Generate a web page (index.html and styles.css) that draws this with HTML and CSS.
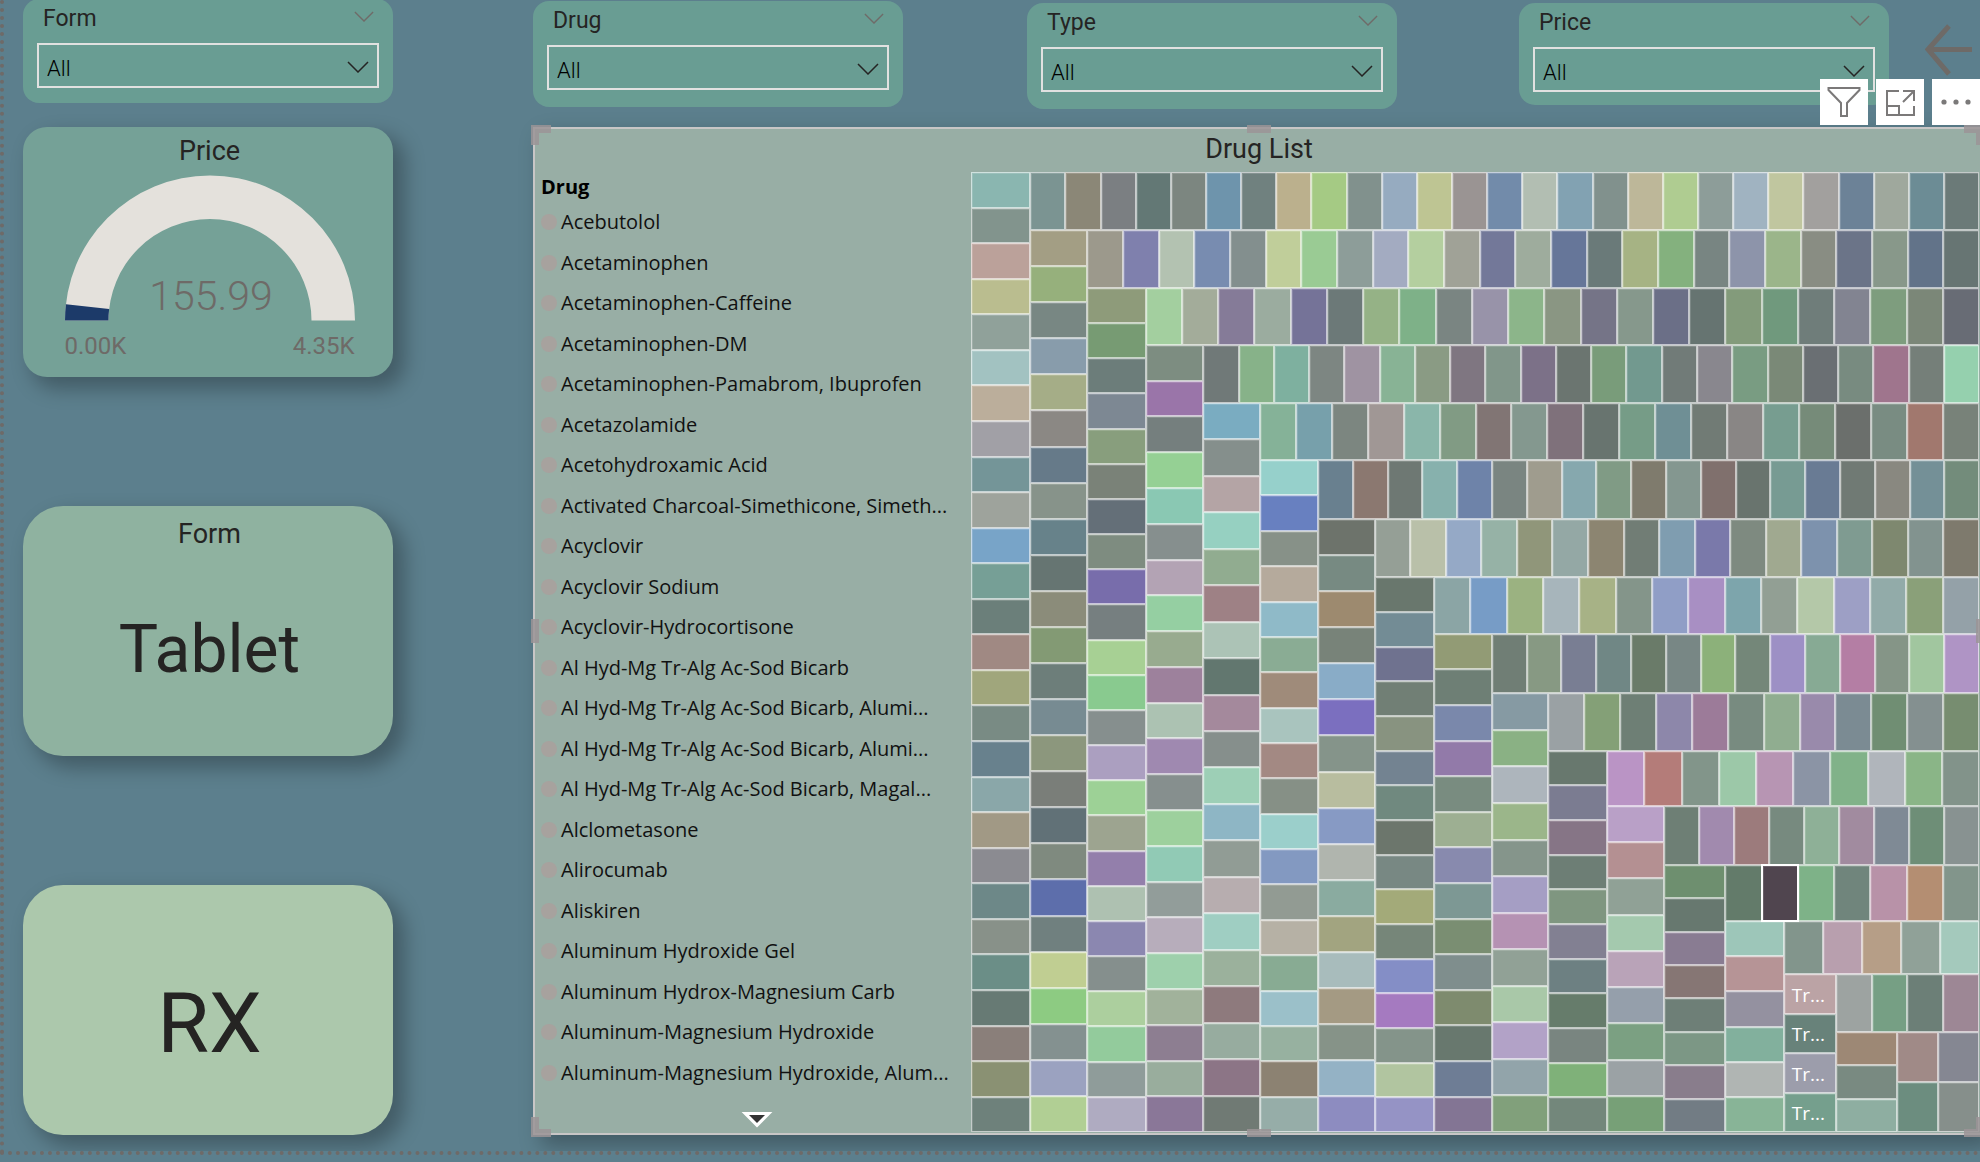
FILE: index.html
```html
<!DOCTYPE html>
<html lang="en">
<head>
<meta charset="utf-8">
<title>Drug List</title>
<link rel="stylesheet" href="styles.css">
</head>
<body>
<svg class="defs" aria-hidden="true">
  <symbol id="chevron" viewBox="0 0 22 12"><path d="M1 1l10 10L21 1" fill="none" stroke="currentColor" stroke-width="1.5"/></symbol>
</svg>
<main class="report">
  <section class="slicer slicer-form">
    <header class="slicer-head"><label for="form">Form</label><svg class="slicer-caret"><use href="#chevron"/></svg></header>
    <div class="dropdown"><select id="form"><option>All</option></select><svg class="dropdown-caret"><use href="#chevron"/></svg></div>
  </section>

  <div class="filters">
    <section class="slicer slicer-drug">
      <header class="slicer-head"><label for="drug">Drug</label><svg class="slicer-caret"><use href="#chevron"/></svg></header>
      <div class="dropdown"><select id="drug"><option>All</option></select><svg class="dropdown-caret"><use href="#chevron"/></svg></div>
    </section>
    <section class="slicer slicer-type">
      <header class="slicer-head"><label for="type">Type</label><svg class="slicer-caret"><use href="#chevron"/></svg></header>
      <div class="dropdown"><select id="type"><option>All</option></select><svg class="dropdown-caret"><use href="#chevron"/></svg></div>
    </section>
    <section class="slicer slicer-price">
      <header class="slicer-head"><label for="price">Price</label><svg class="slicer-caret"><use href="#chevron"/></svg></header>
      <div class="dropdown"><select id="price"><option>All</option></select><svg class="dropdown-caret"><use href="#chevron"/></svg></div>
    </section>
    <button class="back" type="button" aria-label="Back">
      <svg width="48" height="52" viewBox="0 0 48 52"><path d="M24 2L3 25.500L24 50M3 25.500H47" fill="none" stroke="#6e6a67" stroke-width="5"/></svg>
    </button>
  </div>

  <div class="cards">
    <section class="card card-gauge">
      <h2 class="card-title">Price</h2>
      <svg class="gauge" viewBox="0 0 290 146" role="img" aria-label="155.99 of 4.35K">
        <path d="M0 145.500A145 145 0 0 1 290 145.500H246.500A101.500 101.500 0 0 0 43.500 145.500Z" fill="#e4e1dc"/>
        <path d="M0 145.500A145 145 0 0 1 .92 129.200L44.140 134.100A101.500 101.500 0 0 0 43.500 145.500Z" fill="#1c3a69"/>
        <text class="gauge-value" x="146" y="135" text-anchor="middle">155.99</text>
      </svg>
      <div class="gauge-range"><span>0.00K</span><span>4.35K</span></div>
    </section>
    <section class="card card-form">
      <h2 class="card-title">Form</h2>
      <p class="card-value">Tablet</p>
    </section>
    <section class="card card-type">
      <p class="card-value">RX</p>
    </section>
  </div>

  <section class="panel">
    <h2 class="panel-title">Drug List</h2>
    <div class="panel-body">
      <div class="legend">
        <h3 class="legend-title">Drug</h3>
        <ul class="legend-list">
          <li>Acebutolol</li>
          <li>Acetaminophen</li>
          <li>Acetaminophen-Caffeine</li>
          <li>Acetaminophen-DM</li>
          <li>Acetaminophen-Pamabrom, Ibuprofen</li>
          <li>Acetazolamide</li>
          <li>Acetohydroxamic Acid</li>
          <li>Activated Charcoal-Simethicone, Simeth...</li>
          <li>Acyclovir</li>
          <li>Acyclovir Sodium</li>
          <li>Acyclovir-Hydrocortisone</li>
          <li>Al Hyd-Mg Tr-Alg Ac-Sod Bicarb</li>
          <li>Al Hyd-Mg Tr-Alg Ac-Sod Bicarb, Alumi...</li>
          <li>Al Hyd-Mg Tr-Alg Ac-Sod Bicarb, Alumi...</li>
          <li>Al Hyd-Mg Tr-Alg Ac-Sod Bicarb, Magal...</li>
          <li>Alclometasone</li>
          <li>Alirocumab</li>
          <li>Aliskiren</li>
          <li>Aluminum Hydroxide Gel</li>
          <li>Aluminum Hydrox-Magnesium Carb</li>
          <li>Aluminum-Magnesium Hydroxide</li>
          <li>Aluminum-Magnesium Hydroxide, Alum...</li>
        </ul>
        <button class="legend-more" type="button" aria-label="Next page">
          <svg width="32" height="17" viewBox="0 0 32 17"><path d="M3 2H29L16 15Z" fill="#fff" stroke="#fff" stroke-width="2"/><path d="M8 4H24L16 12Z" fill="#333"/></svg>
        </button>
      </div>
      <div class="treemap" id="treemap"></div>
    </div>

    <div class="actions">
      <button type="button" aria-label="Filters"><svg width="34" height="34" viewBox="0 0 34 34"><path d="M1.500 3H32.500V5L20 18V31H14V18L1.500 5Z" fill="none" stroke="#7b7979" stroke-width="2"/></svg></button>
      <button type="button" aria-label="Focus mode"><svg width="34" height="34" viewBox="0 0 34 34"><path d="M16 6H4V30H31V21M4 21H16V30M20 6H31V16M31 6L20 17" fill="none" stroke="#7b7979" stroke-width="2"/></svg></button>
      <button type="button" aria-label="More options"><svg width="34" height="34" viewBox="0 0 34 34"><g fill="#7b7979"><circle cx="5" cy="17" r="2.600"/><circle cx="17" cy="17" r="2.600"/><circle cx="29" cy="17" r="2.600"/></g></svg></button>
    </div>

    <i class="grip grip-corner grip-nw"></i><i class="grip grip-n"></i><i class="grip grip-corner grip-ne"></i>
    <i class="grip grip-w"></i><i class="grip grip-e"></i>
    <i class="grip grip-corner grip-sw"></i><i class="grip grip-s"></i><i class="grip grip-corner grip-se"></i>
  </section>
</main>
<script src="treemap.js"></script>
</body>
</html>
```
FILE: styles.css
```css
* { box-sizing: border-box; }

body {
  margin: 0;
  min-height: 100vh;
  background: #5c7f8d;
  color: #252423;
  font-family: Roboto, "Liberation Sans", sans-serif;
  overflow-x: hidden;
}

h2, h3, p, ul { margin: 0; padding: 0; font-weight: 400; }
button { border: 0; padding: 0; background: none; display: grid; place-items: center; }
.defs { position: absolute; width: 0; height: 0; }

/* Report canvas with the dotted page edge */
.report {
  min-height: calc(100vh - 7px);
  display: grid;
  grid-template-columns: 370fr 1447fr;
  grid-template-rows: 127px 1fr;
  column-gap: 140px;
  padding: 0 0 16px 19px;
  border: 4px dotted #6e6a68;
  border-top: 0;
  border-right: 0;
  overflow: hidden;
}

/* Slicers */
.slicer {
  height: 106px;
  padding: 0 14px;
  border-radius: 16px;
  background: #699d93;
}
.slicer-form { height: 104px; margin-top: -1px; }
.slicer-drug { margin-top: 1px; }
.slicer-type { margin-top: 3px; }
.slicer-price { height: 102px; margin-top: 3px; }
.slicer-head {
  display: flex;
  justify-content: space-between;
  height: 44px;
  padding: 0 5px 0 6px;
  font-size: 23px;
  line-height: 40px;
}
.slicer-caret { width: 20px; height: 11px; margin-top: 12px; color: #6f6b68; }
.dropdown { position: relative; }
.dropdown select {
  display: block;
  width: 100%;
  height: 45px;
  padding: 5px 8px 0;
  border: 2px solid #e1e1e0;
  border-radius: 0;
  background: transparent;
  appearance: none;
  font: 300 22px Roboto, "Liberation Sans", sans-serif;
  color: #000;
}
.dropdown-caret {
  position: absolute;
  right: 10px;
  top: 18px;
  width: 22px;
  height: 12px;
  pointer-events: none;
}

.filters {
  display: grid;
  grid-template-columns: 494fr 492fr 406fr 55fr;
  align-items: start;
}
.slicer-drug { margin-right: 124px; }
.slicer-type { margin-right: 122px; }
.slicer-price { margin-right: 36px; }
.back { margin-top: 24px; justify-content: start; }

/* Left cards */
.cards { display: flex; flex-direction: column; justify-content: space-between; gap: 24px; }
.card {
  height: 250px;
  padding-left: 3px;
  border-radius: 40px;
  text-align: center;
  box-shadow: 10px 10px 20px 2px rgba(0, 0, 0, .28);
}
.card-title { font-size: 27px; line-height: 48px; }
.card-gauge { background: #75a197; border-radius: 24px; }
.card-form { background: #8fb2a0; padding-top: 4px; }
.card-type { background: #acc8ac; padding-top: 28px; }
.card-form .card-value { font-size: 66px; line-height: 184px; }
.card-type .card-value { font-size: 84px; line-height: 222px; }
.gauge { display: block; width: 290px; height: 146px; margin: 0 auto; }
.gauge-value { font: 300 41px Roboto, "Liberation Sans", sans-serif; fill: #6e6a67; }
.gauge-range {
  display: flex;
  justify-content: space-between;
  width: 290px;
  margin: 0 auto;
  font-size: 24px;
  line-height: 50px;
  color: #6e6a67;
}

/* Drug list panel */
.panel {
  position: relative;
  display: flex;
  flex-direction: column;
  padding: 0 1px 1px 0;
  border: 2px solid #c8c6c6;
  border-right: 0;
  background: #98aea5;
  box-shadow: 10px 10px 20px 2px rgba(0, 0, 0, .28);
}
.panel-title { height: 43px; padding-left: 4px; font-size: 27px; line-height: 40px; text-align: center; }
.panel-body { flex: 1; display: grid; grid-template-columns: 436px 1fr; }

.legend {
  display: flex;
  flex-direction: column;
  padding-left: 6px;
  font: 20px "Open Sans", "Noto Sans", sans-serif;
  color: #111;
}
.legend-title { font-size: 20px; font-weight: 700; line-height: 30px; color: #000; }
.legend-list { flex: 1; display: grid; grid-auto-rows: 1fr; list-style: none; }
.legend-list li { display: flex; align-items: center; gap: 4px; line-height: 28px; white-space: nowrap; }
.legend-list li::before { content: ""; width: 16px; height: 16px; border-radius: 50%; background: #a7a29e; }
.legend-more { height: 39px; padding: 18px 0 0 2px; place-items: start center; }

/* Treemap: bands nest inside one another, alternating column and row */
.treemap, .rest, .band { display: flex; min-width: 0; min-height: 0; }
.rest, .treemap { flex-basis: 0; }
.band { flex-basis: 0; }
.across { flex-direction: row; }
.down { flex-direction: column; }
.cell {
  flex: 1 1 0;
  min-width: 0;
  min-height: 0;
  overflow: hidden;
  border: 1px solid rgba(255, 255, 255, .6);
  box-shadow: inset 1px 1px 0 rgba(255, 255, 255, .15);
  display: flex;
  align-items: center;
  padding: 2px 0 0 7px;
  color: #fff;
  font: 19px "Open Sans", "Noto Sans", sans-serif;
}
.cell.selected { position: relative; outline: 1px solid #fff; border-color: #fff; }

/* Visual header buttons over the panel's top edge */
.actions { position: absolute; right: 0; top: -50px; display: flex; gap: 8px; }
.actions button { width: 48px; height: 46px; background: #fff; }

/* Resize grips */
.grip { position: absolute; background: rgba(155, 148, 150, .85); }
.grip-n, .grip-s { left: 50%; width: 24px; height: 8px; margin-left: -11px; }
.grip-w, .grip-e { top: 490px; width: 8px; height: 24px; }
.grip-n { top: -4px; }
.grip-s { bottom: -4px; }
.grip-w { left: -4px; }
.grip-e { right: 0; width: 4px; }
.grip-corner { width: 20px; height: 20px; }
.grip-nw { left: -4px; top: -4px; clip-path: polygon(0 0, 100% 0, 100% 8px, 8px 8px, 8px 100%, 0 100%); }
.grip-sw { left: -4px; bottom: -4px; clip-path: polygon(0 0, 8px 0, 8px 12px, 100% 12px, 100% 100%, 0 100%); }
.grip-ne { right: -4px; top: -4px; clip-path: polygon(0 0, 100% 0, 100% 100%, 12px 100%, 12px 8px, 0 8px); }
.grip-se { right: -4px; bottom: -4px; clip-path: polygon(12px 0, 100% 0, 100% 100%, 0 100%, 0 12px, 12px 12px); }
```
FILE: treemap.js
```js
// Bands of the treemap, from the outside in: a column on the left, then a row
// on top of what remains, and so on. Each band: [thickness, cell colours].
const bands = [
  [59.3, "8ab6b0 82948d bba19a babd8f 90a19a a2c2c1 bbae9b a1a0a6 749598 9ea39c 78a4c8 769f96 6b7f7a a08983 a0a67c 798b84 68818d 8aa7a9 a19985 8b8b91 6d8888 889189 6b8e87 677a74 8a7f7a 8a9173 6e817b"],
  [58, "7b9492 8b8777 7b7f82 637875 7c8680 6e94ac 70817f bbb08d a5ca84 81918d 96abc0 bec593 9a9493 728baa b2beb2 82a2b2 81918d bdb799 afcc91 8d9d99 a0b3c1 c0c69f a2a09e 6c8297 9fa89d 6c8c95 6b7a78"],
  [57, "a39e84 96b07c 788783 889cab a5ad87 8b8884 667a89 87938a 67828a 667572 8b8c7a 839a74 6d7e7a 778b92 8c977d 7a7e79 617177 7f8a7f 5d6eab 70807f c0ce92 8dcb82 849190 9ba2c0 b1cf94"],
  [57.7, "9c998c 7f80ad b3c2b1 788cb0 838f8e c0ce9a 9acb94 8d9d99 a3abc1 b4cf9f a0a297 737899 9eac9d 667699 6a7a79 a6b384 84b17e 788582 8d94aa 9bb58a 898d83 6b7488 88988a 627389 677573"],
  [58.4, "8e9b7a 779b73 6c7d7a 7d8893 889e7d 7a8278 646f78 7e8c80 786dab 767f80 a7d094 89ca8f 868f8e ab9fc0 9dd196 9da490 937fab aec1b1 8b87b0 858f8d accf9e 93cb9c 8f9c9a afabc1"],
  [57, "a3cf9f a3ac9a 857b98 9bac9f 757398 6c7978 95b286 7eb188 7a8582 9893a9 8cb58a 8a9683 757487 86988c 6b6f87 667471 839b7b 70997d 6f7d7a 828491 7e9d7e 7b8778 686c75"],
  [57.6, "7d8d81 9a75a9 757f7e 95d094 8ac8b3 868f8e b3a3b4 95cfa2 98ab8f 9d819c acc2b2 9f89b0 868f8e 9dd09d 91cab5 929d9a b7adbb 9ed0ac a1b29b 8d7e91 99ad9d 8a7798"],
  [58, "707978 87b289 7eb09f 7d8682 9f93a2 88b395 8a9b84 7f7681 81968a 7c7188 6b7570 799c7a 72998f 717b78 89878e 799c82 7a8977 6a6f73 788b80 9f758d 757f79 95d0ae"],
  [56.4, "7aacc1 858f8c b4a4a5 96d0c1 91ac90 9e8185 acc3b6 62776f a4899c 868f8c 9dcfb6 8eb6c5 919c95 b7adaf 9fcec2 9bb19c 8e7a7d 97ac9f 8c7586 707a74"],
  [57.1, "85b298 77a0ab 7c8680 a09795 8ab6aa 819b84 817574 84988f 7f717b 68746f 769c87 6f8f95 717b75 898685 779d90 768b79 6b6f6c 798c82 a1786e 788279"],
  [58.3, "96d0cb 6880c0 879188 b5aa9c 8fbac8 8aac94 9f8b7a a9c4be a38983 869086 9bcfcb 8399c1 929b93 b6b1a5 88ab93 9bc0c9 97b1a0 8c8272 96ada8"],
  [59, "69808f 8b7870 6e7873 87b1ad 6e83a9 7a8581 9f9c8e 86a8ae 809b85 7f7b6d 849790 80706d 69746e 779b93 697b94 707a74 898880 749097 738c7b"],
  [56.7, "6d736b 778a82 9d8a6f 788379 89acc7 7b6fbf 85948a b8bd9f 879ac4 b0b5ae 8aaba0 a2a480 a8bcbc a49a83 869388 94b2c5 8d8cc0"],
  [57.9, "959f96 b9c0a9 95a9c6 96b2a6 90967a 94a8a5 8c8571 717d75 7f9db0 7a79aa 7e8a80 a0a990 7d92ad 7f9b91 7e886f 82938f 7e7a6d"],
  [59.3, "69776d 738c95 6f728f 717f75 889380 738391 70897f 6c766c 788883 a3aa79 768679 848ec6 a57ac0 84948a b1c5a0 9593c5"],
  [56.6, "8ba5a5 779cc6 9bb281 a7b5bb a7b286 84958a 909ec6 a88fc3 7da5ac 929f94 b4c8a8 9d9fc5 92aba9 8aa079 94a1a8"],
  [57.7, "929b75 6e7f75 7a88ab 927aa9 798c80 9daf92 888aae 7d9894 7a8e72 7f8e8d 7e8b6e 68786e 6e7d95 837594"],
  [59.4, "707e75 879983 797e93 708785 6a7b69 788785 8cb17a 748779 9d90c5 87aa94 b47ea4 859587 a1c69f af94c5"],
  [56.5, "869aa3 8ab184 adb5bc 9bb68a 85958b a59ec4 b592b3 91a196 a9c8a8 b2a2c7 92a4aa 81a07b"],
  [57.3, "9aa1a4 84a077 6e7f75 8d87aa 9c7b99 788b80 90ad90 998aab 7b8b93 708e73 849090 778d70"],
  [59.1, "68786e 7b7c91 867586 6d7e75 7f9680 828092 6d8082 667c6b 798580 7fb179 73877b"],
  [55.3, "ba94c5 b47c79 82958a 9cc8a8 b795b3 8b94a5 81b289 b0b5bb 8ab587 82938a"],
  [56.7, "b9a0c7 b49092 90a196 a4c9ae b9a3b8 959fab 7ba082 9ba2a5 77a077"],
  [58.7, "6e7f75 a18aae 9c7b7c 778a7f 8eb097 a18b9f 7f8a95 6e8e77 889291"],
  [61.3, "6e8f6f 67786f 897c92 867674 6e7f77 7c9785 897d8c 727c84"],
  [56.3, "637b6a 50454f* 7eb288 70857c b892a8 b48e72 82958b"],
  [58.4, "9dc6b9 b69496 9491a0 82b09d b0b5b3 88b497"],
  [53, "82958c b89fae b69e87 90a198 a4c9bc"],
  [52, "bba3a5:Tr... 68827a:Tr... 9c9dab:Tr... 759f8d:Tr..."],
  [57.7, "9da3a1 769f84 6c7f77 9d8795"],
  [61.3, "9d8875 798a81 8eaea1"],
  [50, "a08a87 858792"],
  [50, "6c8d7f 868f8b"]
];

function element(className, parent) {
  const node = document.createElement("div");
  node.className = className;
  parent.append(node);
  return node;
}

let host = document.getElementById("treemap");
let width = 1008, height = 959;

bands.forEach(([size, colours], i) => {
  const isColumn = i % 2 === 0 && i < bands.length - 1;
  const band = element("band " + (isColumn ? "down" : "across"), host);
  host.classList.add(isColumn ? "across" : "down");
  band.style.flexGrow = size;

  for (const entry of colours.split(" ")) {
    const [colour, label] = entry.split(":");
    const cell = element(colour.endsWith("*") ? "cell selected" : "cell", band);
    cell.style.backgroundColor = "#" + colour.slice(0, 6);
    if (label) cell.textContent = label;
  }

  if (isColumn) width -= size; else height -= size;
  // The last two rows share one column, so the final band stays in the same host.
  if (i < bands.length - 2) {
    host = element("rest", host);
    host.style.flexGrow = isColumn ? width : height;
  }
});
```
